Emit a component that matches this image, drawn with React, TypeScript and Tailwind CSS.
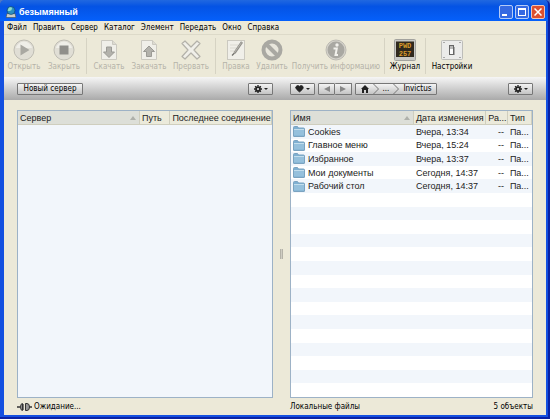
import React from 'react';
import { Heart } from 'lucide-react';

const menuItems = ['Файл', 'Править', 'Сервер', 'Каталог', 'Элемент', 'Передать', 'Окно', 'Справка'];

const files = [
  { name: 'Cookies', date: 'Вчера, 13:34' },
  { name: 'Главное меню', date: 'Вчера, 15:24' },
  { name: 'Избранное', date: 'Вчера, 13:37' },
  { name: 'Мои документы', date: 'Сегодня, 14:37' },
  { name: 'Рабочий стол', date: 'Сегодня, 14:37' },
];

const ROWS = 20;
const emptyRows = Array.from({ length: ROWS - files.length }, (_, i) => i + files.length);

const PlayIcon = () => (
  <svg viewBox="0 0 22 22" className="size-[22px]">
    <circle cx="11" cy="11" r="10" fill="#e0ded5" stroke="#bebcb3" />
    <path d="M3 9a8.200 8.200 0 0 1 16 0z" fill="#efeee8" />
    <path d="M7.500 5.500v11l9-5.500z" fill="#a9a8a2" />
  </svg>
);

const StopIcon = () => (
  <svg viewBox="0 0 22 22" className="size-[22px]">
    <circle cx="11" cy="11" r="10" fill="#e0ded5" stroke="#bebcb3" />
    <path d="M3 9a8.200 8.200 0 0 1 16 0z" fill="#efeee8" />
    <rect x="6.500" y="6.500" width="9" height="9" fill="#908f8b" />
  </svg>
);

const PageIcon = ({ up = false }: { up?: boolean }) => (
  <svg viewBox="0 0 22 22" className="size-[22px]">
    <path d="M3.500 1.500h11l4 4v15h-15z" fill="#f0efe9" stroke="#cbc9c0" />
    <path d="M14.500 1.500v4h4" fill="#dddbd2" stroke="#cbc9c0" />
    <path
      d={up ? 'M11 7l-5.500 5.500h3v5h5v-5h3z' : 'M11 18.500L5.500 13h3V8h5v5h3z'}
      fill="#b3b2ac"
      stroke="#9b9a95"
    />
  </svg>
);

const CrossIcon = () => (
  <svg viewBox="0 0 22 22" className="size-[22px]">
    <path
      d="M2 4.500L5 2l6 6 6-6 3 2.500-6 6.500 6 6.500-3 2.500-6-6-6 6-3-2.500L8 11z"
      fill="#f0efe9"
      stroke="#b3b1a9"
      strokeWidth="1.200"
      strokeLinejoin="round"
    />
  </svg>
);

const EditIcon = () => (
  <svg viewBox="0 0 22 22" className="size-[22px]">
    <rect x="2.500" y="1.500" width="17" height="19" fill="#f0efe9" stroke="#cbc9c0" />
    <path d="M5 6h8M5 9h6M5 12h4" stroke="#dbd9d1" />
    <path d="M17 3L9.500 14" stroke="#8f8e89" strokeWidth="2.400" fill="none" />
    <path d="M9.500 14L7 16.500" stroke="#6f6e6a" strokeWidth="1.200" />
    <path d="M16.500 3.500L9.500 13.500" stroke="#d5d3cb" strokeWidth=".6" />
  </svg>
);

const DeleteIcon = () => (
  <svg viewBox="0 0 22 22" className="size-[22px]">
    <circle cx="11" cy="11" r="8.500" fill="#e8e6dc" stroke="#a9a8a2" strokeWidth="4" />
    <path d="M5.500 5.500l11 11" stroke="#a9a8a2" strokeWidth="4" />
  </svg>
);

const InfoIcon = () => (
  <svg viewBox="0 0 22 22" className="size-[22px]">
    <circle cx="11" cy="11" r="10" fill="#d5d3cb" stroke="#bdbbb3" />
    <circle cx="11" cy="11" r="8.500" fill="#a9a8a2" />
    <circle cx="12" cy="6" r="1.700" fill="#f2f1ec" />
    <path d="M8.500 9.500h3.300l-1.300 6.500h2.500" fill="none" stroke="#f2f1ec" strokeWidth="2" />
  </svg>
);

const LogIcon = () => (
  <svg viewBox="0 0 22 22" className="size-[22px]">
    <rect x=".5" y=".5" width="21" height="21" rx="1" fill="#c9c9c5" stroke="#a2a29e" />
    <rect x="2" y="2.500" width="18" height="15.500" fill="#30291d" />
    <g fontSize="7" fontWeight="bold" fill="#d79a2c" fontFamily="Liberation Mono, monospace">
      <text x="11" y="9" textAnchor="middle">PWD</text>
      <text x="11" y="17" textAnchor="middle">257</text>
    </g>
  </svg>
);

const SwitchIcon = () => (
  <svg viewBox="0 0 22 22" className="size-[22px]">
    <rect x=".5" y="1.500" width="21" height="19" rx="1" fill="#ebebea" stroke="#bdbdb9" />
    <path d="M2.500 3.500h1M18.500 3.500h1M2.500 18.500h1M18.500 18.500h1" stroke="#666" />
    <rect x="8.500" y="6.500" width="4" height="9" fill="#fafafa" stroke="#666" />
    <path d="M9 7h3v3H9z" fill="#b8b8b8" />
    <path d="M13.500 8v8" stroke="#aaa" />
  </svg>
);

const Gear = () => (
  <svg viewBox="0 0 16 16" className="size-2">
    <circle cx="8" cy="8" r="4" fill="none" stroke="#222" strokeWidth="3.500" />
    <path
      d="M8 0v3M8 13v3M0 8h3M13 8h3M2.300 2.300l2.200 2.200M11.500 11.500l2.200 2.200M2.300 13.700l2.200-2.200M11.500 4.500l2.200-2.200"
      stroke="#222"
      strokeWidth="2.800"
    />
  </svg>
);

const HomeIcon = () => (
  <svg viewBox="0 0 8 8" className="size-2">
    <path d="M4 0l4 4H7v4H5V5H3v3H1V4H0z" fill="#222" />
  </svg>
);

const Caret = () => (
  <svg viewBox="0 0 4 2" className="h-0.5 w-1">
    <path d="M0 0h4L2 2z" fill="#222" />
  </svg>
);

const FolderIcon = () => (
  <svg viewBox="0 0 12 11" className="h-[11px] w-3 shrink-0">
    <path d="M.5 10V1.500q0-1 1-1h3l1 1.500h5q1 0 1 1V10q0 .5-.5.5H1q-.5 0-.5-.5z" fill="#7fb0d2" stroke="#7ba3c0" />
    <path d="M1 4h10v5.500H1z" fill="#95c0dc" />
    <path d="M1 3.500h10" stroke="#c3deed" />
  </svg>
);

const PlugIcon = () => (
  <svg viewBox="0 0 15 8" className="h-2 w-[15px]">
    <path d="M0 4h3M12 4h3" stroke="#333" strokeWidth="1.500" />
    <path d="M5.500.5q-2 0-2 3.500t2 3.500zM8.500.5h1.500q2.500 0 2.500 3.500t-2.500 3.500H8.500z" fill="#999" stroke="#333" />
    <path d="M6.500 1v6" stroke="#777" />
  </svg>
);

const AppIcon = () => (
  <svg viewBox="0 0 10 12" className="h-3 w-2.5">
    <path d="M1 7.500h8l1 4H0z" fill="#c9ccc8" stroke="#3b4a55" strokeWidth=".6" />
    <circle cx="5" cy="4.500" r="4" fill="#2b8fc0" stroke="#123d66" strokeWidth=".6" />
    <path d="M3 1.500q3-1 3 1T3.500 5 2 3.500z" fill="#8fdcc9" />
  </svg>
);

type ToolProps = { label: string; icon: React.ReactNode; disabled?: boolean; className: string };

const Tool = ({ label, icon, disabled = false, className }: ToolProps) => (
  <button
    type="button"
    disabled={disabled}
    className={`flex shrink-0 flex-col items-center whitespace-nowrap text-black disabled:text-[#b5b3a8] ${className}`}
  >
    {icon}
    <span>{label}</span>
  </button>
);

const Divider = () => <div className="mx-0.5 h-9 w-px shrink-0 bg-[#d6d3c3]" />;

const barButton =
  'flex h-3 items-center justify-center border border-[#777] rounded-[1px] bg-linear-to-b from-[#f4f4f4] to-[#c4c4c4] text-black';

const GearButton = () => (
  <button type="button" aria-label="Действия" className={`${barButton} w-[25px] gap-0.5`}>
    <Gear />
    <Caret />
  </button>
);

const Chevron = () => (
  <svg viewBox="0 0 6 10" className="h-2.5 w-1.5">
    <path d="M.5 0l5 5-5 5" fill="none" stroke="#777" />
  </svg>
);

const SortMark = () => (
  <svg viewBox="0 0 6 4" className="h-1 w-1.5">
    <path d="M0 4h6L3 0z" fill="#aeb0aa" />
  </svg>
);

const th = 'h-[14px] border-b border-r border-[#cfcebe] p-0 pl-0.5 text-left font-normal whitespace-nowrap';
const sortedTh = `${th} bg-[#dddfd8]`;
const td = 'h-[13px] p-0 pl-0.5 whitespace-nowrap';

const App: React.FC = () => {
  return (
    <div className="h-screen bg-[#4f78c4] font-['DejaVu_Sans_Condensed','DejaVu_Sans',sans-serif] text-[8px] leading-3 text-black">
      <div className="flex h-full flex-col overflow-hidden rounded-t-[5px] border-r-2 border-b-2 border-[#0a22a4] bg-[#1450e0]">
        <header className="flex h-[21px] shrink-0 items-center gap-[3px] bg-linear-to-b from-[#2068e0] via-[#0453e4] via-30% to-[#0560fb] pt-[3px] pl-1.5 pr-[3px]">
          <AppIcon />
          <h1 className="flex-1 font-['Liberation_Sans',sans-serif] text-[9px] font-bold text-white">безымянный</h1>
          <div className="flex gap-0.5">
            <button type="button" aria-label="Свернуть" className="flex size-3.5 items-end rounded-[2px] border border-[#b4cbf7] bg-[#3569e2] p-0.5">
              <span className="h-0.5 w-[5px] bg-white" />
            </button>
            <button type="button" aria-label="Развернуть" className="size-3.5 rounded-[2px] border border-[#b4cbf7] bg-[#3569e2] p-0.5">
              <span className="block size-2 border border-t-2 border-white" />
            </button>
            <button type="button" aria-label="Закрыть окно" className="size-3.5 rounded-[2px] border border-[#f0c3b6] bg-[#dc5030] p-0.5">
              <svg viewBox="0 0 8 8" className="size-2">
                <path d="M.5.5l7 7M7.500.5l-7 7" stroke="#fff" strokeWidth="1.500" />
              </svg>
            </button>
          </div>
        </header>

        <div className="mr-0.5 mb-0.5 ml-1 flex min-h-0 flex-1 flex-col bg-[#ece9d8]">
          <nav className="flex h-[14px] shrink-0 items-center gap-1.5 border-b border-[#dddac9] pl-[3px]">
            {menuItems.map((item) => (
              <button key={item} type="button">{item}</button>
            ))}
          </nav>

          <div className="flex h-[42px] shrink-0 items-center">
            <Tool label="Открыть" icon={<PlayIcon />} disabled className="w-10" />
            <Tool label="Закрыть" icon={<StopIcon />} disabled className="w-10" />
            <Divider />
            <Tool label="Скачать" icon={<PageIcon />} disabled className="w-10" />
            <Tool label="Закачать" icon={<PageIcon up />} disabled className="w-10" />
            <Tool label="Прервать" icon={<CrossIcon />} disabled className="w-11" />
            <Divider />
            <Tool label="Правка" icon={<EditIcon />} disabled className="w-9" />
            <Tool label="Удалить" icon={<DeleteIcon />} disabled className="w-9" />
            <Tool label="Получить информацию" icon={<InfoIcon />} disabled className="w-[92px]" />
            <Divider />
            <Tool label="Журнал" icon={<LogIcon />} className="w-9" />
            <Divider />
            <Tool label="Настройки" icon={<SwitchIcon />} className="w-12" />
          </div>

          <div className="grid h-[23px] shrink-0 grid-cols-[256fr_17px_243fr] items-center bg-linear-to-b from-[#f6f6f6] to-[#aaaaaa] px-[13px]">
            <div className="flex justify-between">
              <button type="button" className={`${barButton} w-[66px]`}>Новый сервер</button>
              <GearButton />
            </div>
            <div />
            <div className="flex gap-[3px]">
              <button type="button" aria-label="Закладки" className={`${barButton} w-[25px] gap-0.5`}>
                <Heart className="size-[9px] fill-[#222] text-[#222]" />
                <Caret />
              </button>
              <div className="flex">
                <button type="button" aria-label="Назад" className={`${barButton} w-[17px]`}>
                  <svg viewBox="0 0 6 6" className="size-1.5"><path d="M6 0v6L0 3z" fill="#888" /></svg>
                </button>
                <button type="button" aria-label="Вперёд" className={`${barButton} w-[17px] border-l-0`}>
                  <svg viewBox="0 0 6 6" className="size-1.5"><path d="M0 0v6l6-3z" fill="#888" /></svg>
                </button>
              </div>
              <nav className={`${barButton} w-[82px] gap-1`}>
                <a href="#home" aria-label="Домой"><HomeIcon /></a>
                <Chevron />
                <a href="#up">...</a>
                <Chevron />
                <a href="#invictus">Invictus</a>
              </nav>
              <div className="ml-auto"><GearButton /></div>
            </div>
          </div>

          <main className="grid min-h-0 flex-1 grid-cols-[256fr_17px_243fr] px-[13px] pt-2.5 font-['Liberation_Sans',sans-serif] text-[9px] text-[#222]">
            <section className="min-w-0 border border-[#9db2c6] bg-[#f2f6fb]">
              <table className="w-full table-fixed border-separate border-spacing-0">
                <thead className="bg-[#ebeadb]">
                  <tr>
                    <th className={`${sortedTh} w-[48%]`}>
                      <span className="flex items-center justify-between pr-[3px]">Сервер<SortMark /></span>
                    </th>
                    <th className={`${th} w-[12%]`}>Путь</th>
                    <th className={th}>Последнее соединение</th>
                  </tr>
                </thead>
              </table>
            </section>

            <div className="flex items-center justify-center">
              <div className="h-2.5 w-[3px] border-x border-[#b4b2a8] bg-[#cfcdc3]" />
            </div>

            <section className="min-w-0 border border-[#9db2c6] bg-white">
              <table className="h-full w-full table-fixed border-separate border-spacing-0">
                <thead className="bg-[#ebeadb]">
                  <tr>
                    <th className={`${sortedTh} w-[51%]`}>
                      <span className="flex items-center justify-between pr-[3px]">Имя<SortMark /></span>
                    </th>
                    <th className={`${th} w-[30%]`}>Дата изменения</th>
                    <th className={`${th} w-[9%]`}>Ра...</th>
                    <th className={th}>Тип</th>
                  </tr>
                </thead>
                <tbody>
                  {files.map((file) => (
                    <tr key={file.name} className="odd:bg-[#f2f6fb]">
                      <td className={td}>
                        <span className="flex items-center gap-[3px]"><FolderIcon />{file.name}</span>
                      </td>
                      <td className={td}>{file.date}</td>
                      <td className="p-0 pr-1 text-right">--</td>
                      <td className={td}>Па...</td>
                    </tr>
                  ))}
                  {emptyRows.map((row) => (
                    <tr key={row} aria-hidden="true" className="odd:bg-[#f2f6fb]">
                      <td colSpan={4} className="h-[13px] p-0" />
                    </tr>
                  ))}
                </tbody>
              </table>
            </section>
          </main>

          <footer className="grid h-[17px] shrink-0 grid-cols-[256fr_17px_243fr] items-center px-[13px]">
            <div className="flex items-center gap-0.5"><PlugIcon />Ожидание...</div>
            <div />
            <div className="flex justify-between"><span>Локальные файлы</span><span>5 объекты</span></div>
          </footer>
        </div>
      </div>
    </div>
  );
};

export default App;
